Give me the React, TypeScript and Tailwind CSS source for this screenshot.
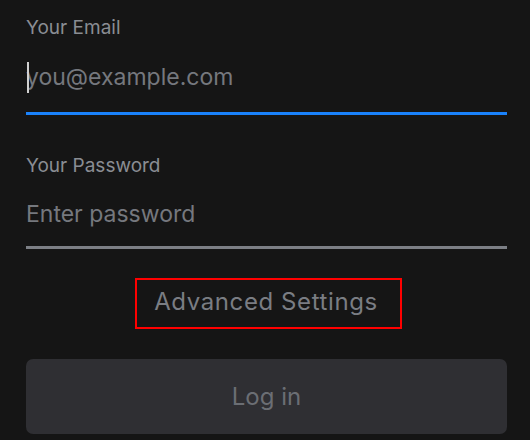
import React from "react";

export default function App() {
  const font = { fontFamily: "Inter, 'Noto Sans', sans-serif" };
  return (
    <div className="min-h-[440px] w-[530px] bg-[#151515] pl-[26px] pr-[23px] pt-[16px] overflow-hidden" style={font}>
      <div className="h-[24px] text-[19px] leading-[24px] text-[#8a8d93]">Your Email</div>
      <div className="relative mt-[21px] border-b-[3px] border-[#1a82fb] pb-[19px]">
        <div className="h-[32px] text-[23px] leading-[32px] text-[#75787e]">you@example.com</div>
        <div className="absolute left-[1px] top-[1px] h-[31px] w-[2px] bg-[#d0d0d0]" />
      </div>
      <div className="mt-[39px] h-[24px] text-[19px] leading-[24px] text-[#8a8d93]">Your Password</div>
      <div className="mt-[20px] border-b-[3px] border-[#7c7f85] pb-[16px]">
        <div className="h-[32px] text-[23px] leading-[32px] text-[#75787e]">Enter password</div>
      </div>
      <div className="mt-[29px] flex justify-center pl-[4px]">
        <div className="flex h-[51px] w-[267px] items-center justify-center border-2 border-[#ff0000] pb-[4px] pr-[5px] text-[24px] tracking-[0.6px] text-[#7a7d83]">
          Advanced Settings
        </div>
      </div>
      <button className="mt-[30px] flex h-[75px] w-full items-center justify-center rounded-[7px] bg-[#2f2f33] text-[24px] text-[#6b6e74]">
        Log in
      </button>
    </div>
  );
}
